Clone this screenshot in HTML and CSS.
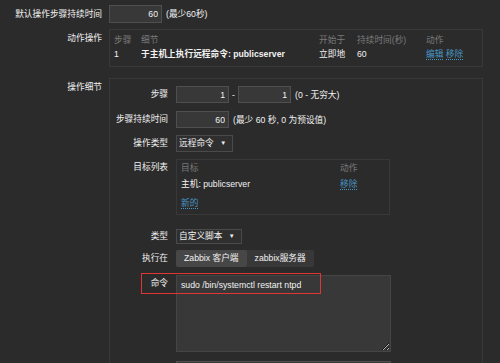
FILE: index.html
```html
<!DOCTYPE html>
<html>
<head>
<meta charset="utf-8">
<title>动作操作</title>
<link rel="stylesheet" href="styles.css">
</head>
<body>

<div class="form">
  <div class="row row-first">
    <label class="lbl">默认操作步骤持续时间</label>
    <div class="ctl">
      <input class="num" type="text" value="60">
      <span class="hint">(最少60秒)</span>
    </div>
  </div>

  <div class="row">
    <label class="lbl top">动作操作</label>
    <div class="box actions">
      <table class="list">
        <colgroup>
          <col style="width:27px"><col style="width:178px"><col style="width:38px"><col style="width:69px"><col>
        </colgroup>
        <tr class="head">
          <td>步骤</td><td>细节</td><td>开始于</td><td>持续时间(秒)</td><td>动作</td>
        </tr>
        <tr>
          <td>1</td>
          <td><b>于主机上执行远程命令: publicserver</b></td>
          <td>立即地</td>
          <td>60</td>
          <td><a class="link">编辑</a> <a class="link">移除</a></td>
        </tr>
      </table>
    </div>
  </div>

  <div class="row row-detail">
    <label class="lbl top">操作细节</label>
    <div class="box detail">

      <div class="f-row">
        <label class="f-lbl">步骤</label>
        <div class="f-ctl">
          <input class="num" type="text" value="1">
          <span class="sep">-</span>
          <input class="num" type="text" value="1">
          <span class="hint">(0 - 无穷大)</span>
        </div>
      </div>

      <div class="f-row row-dur">
        <label class="f-lbl">步骤持续时间</label>
        <div class="f-ctl">
          <input class="num" type="text" value="60">
          <span class="hint">(最少 60 秒, 0 为预设值)</span>
        </div>
      </div>

      <div class="f-row">
        <label class="f-lbl">操作类型</label>
        <div class="f-ctl">
          <div class="select">远程命令 <span class="caret">▼</span></div>
        </div>
      </div>

      <div class="f-row">
        <label class="f-lbl">目标列表</label>
        <div class="f-ctl">
          <div class="targets">
            <table class="list">
              <colgroup><col style="width:159px"><col></colgroup>
              <tr class="head"><td>目标</td><td>动作</td></tr>
              <tr><td>主机: publicserver</td><td><a class="link">移除</a></td></tr>
              <tr class="new"><td colspan="2"><a class="link">新的</a></td></tr>
            </table>
          </div>
        </div>
      </div>

      <div class="f-row row-type">
        <label class="f-lbl">类型</label>
        <div class="f-ctl">
          <div class="select short">自定义脚本 <span class="caret">▼</span></div>
        </div>
      </div>

      <div class="f-row row-exec">
        <label class="f-lbl">执行在</label>
        <div class="f-ctl">
          <div class="seg">
            <span class="seg-btn on">Zabbix 客户端</span>
            <span class="seg-btn">zabbix服务器</span>
          </div>
        </div>
      </div>

      <div class="f-row row-cmd">
        <label class="f-lbl">命令</label>
        <div class="f-ctl">
          <textarea class="cmd">sudo /bin/systemctl restart ntpd</textarea>
        </div>
        <div class="mark"></div>
      </div>

      <div class="f-row row-next">
        <label class="f-lbl"></label>
        <div class="f-ctl">
          <input class="wide" type="text" value="">
        </div>
      </div>

    </div>
  </div>
</div>

</body>
</html>
```

FILE: styles.css
```css
body {
	margin: 0;
	background: #2b2b2b;
	color: #f2f2f2;
	font-family: "Liberation Sans", "Noto Sans CJK SC", sans-serif;
	font-size: 8.7px;
	line-height: 14px;
	overflow: hidden;
}

.form {
	padding-top: 5px;
}

.row {
	display: flex;
	gap: 7px;
	align-items: flex-start;
}

.row + .row {
	margin-top: 6px;
}

.row-first {
	align-items: center;
}

.row.row-detail {
	margin-top: 11px;
}

.lbl {
	width: 102px;
	flex: none;
	text-align: right;
}

.lbl.top {
	padding-top: 2px;
}

.ctl, .f-ctl {
	display: flex;
	align-items: center;
	gap: 3px;
}

.hint {
	margin-left: 1px;
}

input.num, input.wide {
	width: 53px;
	height: 18px;
	box-sizing: border-box;
	margin: 0;
	padding: 0 3px;
	background: #383838;
	border: 1px solid #4f4f4f;
	color: #f2f2f2;
	font: inherit;
	text-align: right;
	outline: none;
}

input.wide {
	width: 215px;
}

.box {
	width: 374px;
	box-sizing: border-box;
	border: 1px solid #383838;
}

.actions {
	padding: 3px 4px 5px;
}

.list {
	border-collapse: collapse;
	table-layout: fixed;
	width: 100%;
}

.list td {
	padding: 0;
	white-space: nowrap;
}

.list .head td {
	color: #7a7a7a;
}

.list b {
	font-weight: bold;
}

.link {
	color: #4796c4;
	border-bottom: 1px dotted #4796c4;
	cursor: pointer;
}

.detail {
	height: 300px;
	padding-top: 7px;
	border-bottom: none;
}

.f-row {
	display: flex;
	gap: 8px;
	align-items: flex-start;
	position: relative;
}

.f-row + .f-row {
	margin-top: 7px;
}

.f-row.row-dur {
	margin-top: 8px;
}

.f-row.row-type {
	margin-top: 14px;
}

.f-row.row-exec {
	margin-top: 6px;
}

.f-row.row-cmd {
	margin-top: 8px;
}

.f-row.row-next {
	margin-top: 9px;
}

.f-lbl {
	width: 58px;
	flex: none;
	text-align: right;
	line-height: 17px;
}

.f-ctl input.num {
	height: 17px;
}

.sep {
	width: 3px;
	text-align: center;
}

.select {
	height: 17px;
	box-sizing: border-box;
	padding: 0 6px 0 2px;
	border: 1px solid #4a4a4a;
	background: #2f2f2f;
	line-height: 15px;
	white-space: nowrap;
}

.select.short {
	height: 15px;
	line-height: 13px;
}

.row-type .f-lbl {
	line-height: 15px;
}

.caret {
	font-size: 6px;
	margin-left: 4px;
	vertical-align: 1px;
}

.targets {
	width: 214px;
	height: 56px;
	box-sizing: border-box;
	border: 1px solid #383838;
	padding: 0 4px 4px;
	line-height: 16px;
}

.targets .new td {
	padding-top: 3px;
}

.seg {
	display: flex;
	background: #383838;
	border-radius: 2px;
	height: 17px;
}

.seg-btn {
	padding: 0 8px;
	line-height: 17px;
	border-radius: 2px;
	white-space: nowrap;
}

.seg-btn.on {
	background: #474747;
}

textarea.cmd {
	width: 215px;
	height: 77px;
	box-sizing: border-box;
	margin: 0;
	padding: 3px 4px;
	background: #383838;
	border: 1px solid #454545;
	color: #f2f2f2;
	font: inherit;
	line-height: 12px;
	outline: none;
}

/* annotation frame over the command line */
.mark {
	position: absolute;
	left: 31px;
	top: -2px;
	width: 180px;
	height: 21px;
	box-sizing: border-box;
	border: 1px solid #de3535;
}
```
